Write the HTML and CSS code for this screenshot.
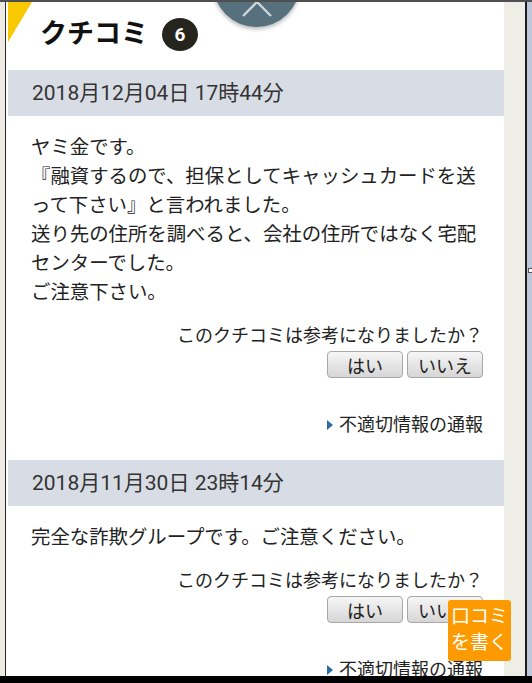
FILE: index.html
```html
<!DOCTYPE html>
<html lang="ja">
<head>
  <meta charset="UTF-8" />
  <title>クチコミ</title>
  <link rel="stylesheet" href="styles.css">
</head>
<body>
  <div class="screen">
    <div class="gutter"></div>

    <!-- 口コミ一覧 -->
    <div class="page">
      <div class="corner"></div>
      <div class="to-top">
        <svg width="87" height="87" viewBox="0 0 87 87">
          <path d="M30 76 L44 62 L58 76" fill="none" stroke="#cfd6da" stroke-width="2.4" />
        </svg>
      </div>

      <div class="head">
        <h1>クチコミ</h1>
        <span class="count">6</span>
      </div>

      <div class="review">
        <div class="date">2018月12月04日 17時44分</div>
        <div class="text">ヤミ金です。<br>『融資するので、担保としてキャッシュカードを送って下さい』と言われました。<br>送り先の住所を調べると、会社の住所ではなく宅配センターでした。<br>ご注意下さい。</div>
        <div class="vote">
          <p>このクチコミは参考になりましたか？</p>
          <div class="buttons">
            <button class="btn">はい</button>
            <button class="btn">いいえ</button>
          </div>
        </div>
        <div class="report"><span class="arrow"></span>不適切情報の通報</div>
      </div>

      <div class="review">
        <div class="date">2018月11月30日 23時14分</div>
        <div class="text">完全な詐欺グループです。ご注意ください。</div>
        <div class="vote">
          <p>このクチコミは参考になりましたか？</p>
          <div class="buttons">
            <button class="btn">はい</button>
            <button class="btn">いいえ</button>
          </div>
        </div>
        <div class="report"><span class="arrow"></span>不適切情報の通報</div>
      </div>
    </div>

    <div class="side"></div>
    <div class="edge"></div>
    <div class="rail"><span class="thumb"></span></div>
  </div>
  <div class="bottom"></div>

  <a class="write" href="#">口コミ<br>を書く</a>
</body>
</html>
```

FILE: styles.css
```css
* {
  margin: 0;
  padding: 0;
  box-sizing: border-box;
}

html, body {
  width: 100%;
  height: 100%;
  overflow: hidden;
  background: #eceae2;
  font-family: Roboto, "Noto Sans CJK JP", sans-serif;
  color: #222;
}

.screen {
  display: flex;
  height: 676px;
  border-top: 2px solid #4d4f50;
}

.gutter {
  width: 5px;
  background: #eceae2;
}

.page {
  position: relative;
  width: 499px;
  padding-left: 2px;
  background: #fff;
  border-left: 1px solid #2a2a2a;
  overflow: hidden;
}

.side {
  width: 21px;
  background: #eeede6;
}

.edge {
  width: 2px;
  background: #1d1d1d;
}

.rail {
  position: relative;
  width: 5px;
  background: #bcc7d9;
}

.thumb {
  position: absolute;
  left: 1px;
  top: 266px;
  width: 5px;
  height: 5px;
  background: #fff;
  border: 1px solid #555;
}

.bottom {
  height: 7px;
  background: #000;
}

/* 左上の黄色い三角 */
.corner {
  position: absolute;
  left: 2px;
  top: 0;
  width: 24px;
  height: 40px;
  background: #f8c800;
  clip-path: polygon(0 0, 100% 0, 0 100%);
}

.to-top {
  position: absolute;
  left: 207px;
  top: -62px;
  width: 87px;
  height: 87px;
  border-radius: 50%;
  background: #56707e;
  box-shadow: 0 2px 4px rgba(0, 0, 0, 0.3);
}

.to-top svg {
  display: block;
}

.head {
  display: flex;
  align-items: center;
  height: 68px;
  padding: 0 0 4px 32px;
}

.head h1 {
  font-size: 27px;
  font-weight: 700;
  line-height: 1;
  color: #111;
}

.count {
  width: 36px;
  height: 33px;
  margin-left: 14px;
  border-radius: 50%;
  background: #26251d;
  color: #fff;
  font-size: 19px;
  font-weight: 700;
  line-height: 33px;
  text-align: center;
}

.date {
  height: 46px;
  padding-left: 24px;
  background: #d8dde5;
  color: #333;
  font-size: 21px;
  line-height: 46px;
}

.text {
  padding: 17px 24px 0 23px;
  font-size: 19.4px;
  line-height: 29px;
  color: #222;
}

.vote {
  padding-right: 21px;
  margin-top: 17px;
  text-align: right;
}

.vote p {
  font-size: 18px;
  line-height: 24px;
}

.buttons {
  display: flex;
  justify-content: flex-end;
  gap: 4px;
  margin-top: 3px;
}

.btn {
  width: 76px;
  height: 27px;
  border: 1px solid #a8a8a8;
  border-radius: 4px;
  background: linear-gradient(#f6f6f6, #d6d6d6);
  font-family: "Noto Sans CJK JP", sans-serif;
  font-size: 18px;
  line-height: 24px;
  color: #222;
}

.report {
  display: flex;
  justify-content: flex-end;
  align-items: center;
  margin: 35px 0 23px;
  padding-right: 21px;
  font-size: 18px;
  line-height: 24px;
  color: #222;
}

.arrow {
  width: 0;
  height: 0;
  margin-right: 6px;
  border-left: 6px solid #2b6ea6;
  border-top: 5px solid transparent;
  border-bottom: 5px solid transparent;
}

/* 口コミを書くボタン */
.write {
  position: fixed;
  right: 21px;
  bottom: 22px;
  width: 63px;
  height: 61px;
  padding-top: 4px;
  border-radius: 3px;
  background: #fd9a00;
  color: #fff;
  font-size: 19px;
  line-height: 26px;
  text-align: center;
  text-decoration: none;
}
```
